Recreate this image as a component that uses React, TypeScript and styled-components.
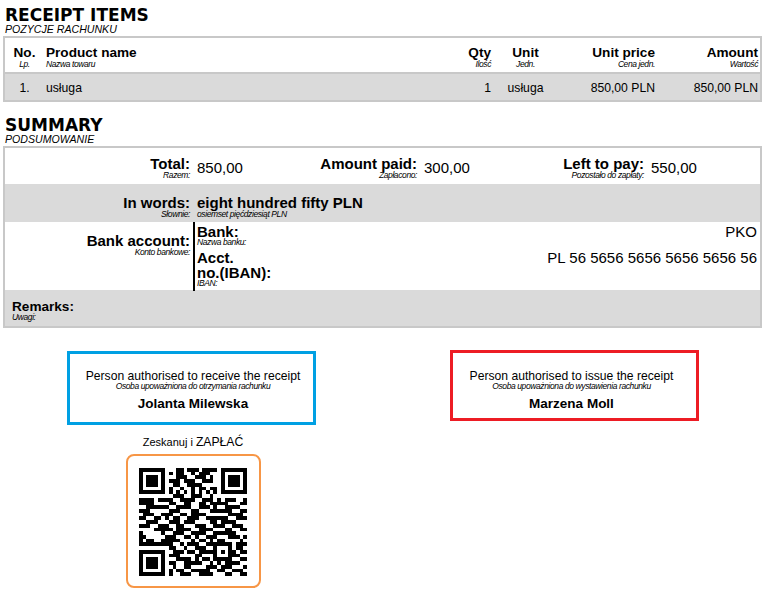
import React from 'react'
import styled, { createGlobalStyle } from 'styled-components'

const GlobalStyle = createGlobalStyle`
  html, body {
    margin: 0;
    padding: 0;
    background: #fff;
    color: #000;
    font-family: "Liberation Sans", Arial, sans-serif;
  }
`

const items = [
  { no: '1.', name: 'usługa', qty: '1', unit: 'usługa', price: '850,00 PLN', amount: '850,00 PLN' },
]

const totals = [
  { label: 'Total:', sub: 'Razem:', value: '850,00' },
  { label: 'Amount paid:', sub: 'Zapłacono:', value: '300,00' },
  { label: 'Left to pay:', sub: 'Pozostało do zapłaty:', value: '550,00' },
]

const qrRows = [
  '1111111 0 0011011101111 0 1111111',
  '1000001 0 1011001011100 0 1000001',
  '1011101 0 0011100111010 0 1011101',
  '1011101 0 1110111001110 0 1011101',
  '1011101 0 0110011110000 0 1011101',
  '1000001 0 1001001011011 0 1000001',
  '1111111 0 1010101010101 0 1111111',
  '0000000 0 0111001110010 0 0000000',
  '1111011 1 1001111001110 1 0111001',
  '1111000 0 1100110011011 1 1100011',
  '0011111 1 0011110011101 0 0111100',
  '1110000 0 1110001100011 1 1110011',
  '0111001 1 1001101111000 0 0011110',
  '1100110 1 0110011100111 1 1100111',
  '0011100 0 1110111000011 0 1111000',
  '1110011 1 0011000111001 1 1001110',
  '0000111 1 1011110011110 0 0110011',
  '1000001 0 0111001111001 1 1111000',
  '1100000 1 1100110100111 0 0011101',
  '1011001 1 1110001011010 1 1000010',
  '1111111 1 1001011100111 1 1110111',
  '0000000 0 1100100111001 0 0010110',
  '1111111 0 0111011011111 0 1011011',
  '1000001 0 1110000110001 0 0011100',
  '1011101 0 0011110101101 1 1110011',
  '1011101 0 1100111110010 1 0111100',
  '1011101 0 0100110000111 0 1110001',
  '1000001 0 1011001111100 1 1001110',
  '1111111 0 1001110011110 0 0110011',
].map(r => r.replace(/ /g, ''))

// modules as one path, row by row
const qrPath = qrRows
  .map((row, y) =>
    row
      .split('')
      .map((c, x) => (c === '1' ? `M${x} ${y}h1v1h-1z` : ''))
      .join(''),
  )
  .join('')

function Label({ main, sub }: { main: string; sub: string }) {
  return (
    <LabelBox>
      <LabelMain>{main}</LabelMain>
      <SubText>{sub}</SubText>
    </LabelBox>
  )
}

export default function App() {
  return (
    <Page>
      <GlobalStyle />
      <Title>RECEIPT ITEMS</Title>
      <TitleSub>POZYCJE RACHUNKU</TitleSub>
      <Frame>
        <ItemRow $head>
          <HeadCell $align="center"><HeadMain>No.</HeadMain><SubText>Lp.</SubText></HeadCell>
          <HeadCell $align="left"><HeadMain>Product name</HeadMain><SubText>Nazwa towaru</SubText></HeadCell>
          <HeadCell $align="right"><HeadMain>Qty</HeadMain><SubText>Ilość</SubText></HeadCell>
          <HeadCell $align="center"><HeadMain>Unit</HeadMain><SubText>Jedn.</SubText></HeadCell>
          <HeadCell $align="right"><HeadMain>Unit price</HeadMain><SubText>Cena jedn.</SubText></HeadCell>
          <HeadCell $align="right"><HeadMain>Amount</HeadMain><SubText>Wartość</SubText></HeadCell>
        </ItemRow>
        {items.map(item => (
          <ItemRow key={item.no}>
            <BodyCell $align="center">{item.no}</BodyCell>
            <BodyCell $align="left">{item.name}</BodyCell>
            <BodyCell $align="right">{item.qty}</BodyCell>
            <BodyCell $align="center">{item.unit}</BodyCell>
            <BodyCell $align="right">{item.price}</BodyCell>
            <BodyCell $align="right">{item.amount}</BodyCell>
          </ItemRow>
        ))}
      </Frame>

      <Title $spaced>SUMMARY</Title>
      <TitleSub>PODSUMOWANIE</TitleSub>
      <Frame>
        <TotalsRow>
          {totals.map(t => (
            <React.Fragment key={t.label}>
              <Label main={t.label} sub={t.sub} />
              <TotalValue>{t.value}</TotalValue>
            </React.Fragment>
          ))}
        </TotalsRow>
        <WordsRow>
          <Label main="In words:" sub="Słownie:" />
          <WordsValue>
            <LabelMain>eight hundred fifty PLN</LabelMain>
            <SubText>osiemset pięćdziesiąt PLN</SubText>
          </WordsValue>
        </WordsRow>
        <BankRow>
          <Label main="Bank account:" sub="Konto bankowe:" />
          <BankDetails>
            <BankLine>
              <BankName>
                <LabelMain>Bank:</LabelMain>
                <SubText>Nazwa banku:</SubText>
              </BankName>
              <BankValue>PKO</BankValue>
            </BankLine>
            <BankLine>
              <BankName>
                <LabelMain>Acct.<br />no.(IBAN):</LabelMain>
                <SubText>IBAN:</SubText>
              </BankName>
              <BankValue>PL 56 5656 5656 5656 5656 56</BankValue>
            </BankLine>
          </BankDetails>
        </BankRow>
        <RemarksRow>
          <RemarksMain>Remarks:</RemarksMain>
          <SubText>Uwagi:</SubText>
        </RemarksRow>
      </Frame>

      <Signatures>
        <SignColumn>
          <SignBox $color="#00a0e3" $height={74} $top={23} $pad="15px 0 0 3px">
            <SignRole>Person authorised to receive the receipt</SignRole>
            <SubText>Osoba upoważniona do otrzymania rachunku</SubText>
            <SignName>Jolanta Milewska</SignName>
          </SignBox>
          <ScanLabel>Zeskanuj i <ScanStrong>ZAPŁAĆ</ScanStrong></ScanLabel>
          <QrCard>
            <svg width="108" height="108" viewBox="0 0 29 29" shapeRendering="crispEdges">
              <path d={qrPath} fill="#000" />
            </svg>
          </QrCard>
        </SignColumn>
        <SignColumn>
          <SignBox $color="#ed1c24" $height={71} $top={22} $pad="16px 6px 0 0">
            <SignRole>Person authorised to issue the receipt</SignRole>
            <SubText>Osoba upoważniona do wystawienia rachunku</SubText>
            <SignName>Marzena Moll</SignName>
          </SignBox>
        </SignColumn>
      </Signatures>
    </Page>
  )
}

const Page = styled.div`
  width: 773px;
  height: 610px;
  overflow: hidden;
  padding-top: 6px;
  box-sizing: border-box;
`

const Title = styled.div<{ $spaced?: boolean }>`
  margin: ${p => (p.$spaced ? '14px' : '0')} 0 0 5px;
  font-family: "DejaVu Sans", Verdana, sans-serif;
  font-size: 17px;
  font-weight: bold;
  line-height: 18px;
`

const TitleSub = styled.div`
  margin: -1px 0 1px 5px;
  font-size: 10.6px;
  font-style: italic;
  line-height: 12px;
`

const Frame = styled.div`
  width: 759px;
  margin-left: 3px;
  box-sizing: border-box;
  border: 2px solid #c8c8c8;
`

const ItemRow = styled.div<{ $head?: boolean }>`
  display: grid;
  grid-template-columns: 38px 1fr 60px 64px 100px 103px;
  height: ${p => (p.$head ? '36px' : '26px')};
  box-sizing: border-box;
  background: ${p => (p.$head ? '#fff' : '#dadada')};
  border-bottom: ${p => (p.$head ? '2px solid #c8c8c8' : 'none')};
`

const HeadCell = styled.div<{ $align: string }>`
  padding: 7px 2px 0 3px;
  text-align: ${p => p.$align};
`

const HeadMain = styled.div`
  font-size: 13.6px;
  font-weight: bold;
  line-height: 16px;
`

const SubText = styled.div`
  font-size: 8.5px;
  font-style: italic;
  letter-spacing: -0.4px;
  line-height: 7px;
  white-space: nowrap;
`

const BodyCell = styled.div<{ $align: string }>`
  padding: 0 2px 0 3px;
  font-size: 12.2px;
  line-height: 29px;
  text-align: ${p => p.$align};
`

const LabelBox = styled.div`
  padding-right: 2px;
  text-align: right;
`

const LabelMain = styled.div`
  font-size: 15px;
  font-weight: bold;
  line-height: 17px;
`

const TotalsRow = styled.div`
  display: grid;
  grid-template-columns: 187px 100px 127px 100px 127px 1fr;
  height: 36px;
  padding-top: 7px;
  box-sizing: border-box;
`

const TotalValue = styled.div`
  padding: 4px 0 0 5px;
  font-size: 15px;
  line-height: 17px;
`

const WordsRow = styled.div`
  display: grid;
  grid-template-columns: 187px 1fr;
  height: 38px;
  padding-top: 10px;
  box-sizing: border-box;
  background: #dadada;
`

const WordsValue = styled.div`
  padding-left: 5px;
`

const BankRow = styled.div`
  display: grid;
  grid-template-columns: 187px 1fr;
  height: 68px;
  > :first-child {
    padding-top: 10px;
  }
`

const BankDetails = styled.div`
  margin-left: 1px;
  padding: 2px 3px 0 2px;
  border-left: 2px solid #000;
  height: 69px;
  box-sizing: border-box;
`

const BankLine = styled.div`
  display: flex;
  justify-content: space-between;
  margin-bottom: 4px;
`

const BankName = styled.div`
  width: 84px;
  ${LabelMain} {
    line-height: 15px;
  }
`

const BankValue = styled.div`
  font-size: 15px;
  line-height: 15px;
  white-space: nowrap;
`

const RemarksRow = styled.div`
  height: 36px;
  padding: 9px 0 0 7px;
  box-sizing: border-box;
  background: #dadada;
`

const RemarksMain = styled.div`
  font-size: 13.6px;
  font-weight: bold;
  line-height: 15px;
`

const Signatures = styled.div`
  display: grid;
  grid-template-columns: 383px 383px;
`

const SignColumn = styled.div`
  display: flex;
  flex-flow: column;
  align-items: center;
`

const SignBox = styled.div<{ $color: string; $height: number; $top: number; $pad: string }>`
  width: 249px;
  height: ${p => p.$height}px;
  margin-top: ${p => p.$top}px;
  padding: ${p => p.$pad};
  box-sizing: border-box;
  border: 3px solid ${p => p.$color};
  text-align: center;
`

const SignRole = styled.div`
  font-size: 12.15px;
  line-height: 14px;
`

const SignName = styled.div`
  margin-top: 6px;
  font-size: 13.5px;
  font-weight: bold;
  line-height: 16px;
`

const ScanLabel = styled.div`
  margin: 10px 0 0 3px;
  font-size: 11px;
  line-height: 14px;
`

const ScanStrong = styled.span`
  font-size: 12.2px;
`

const QrCard = styled.div`
  display: flex;
  justify-content: center;
  align-items: center;
  width: 135px;
  height: 134px;
  margin: 5px 0 0 3px;
  padding-top: 2px;
  box-sizing: border-box;
  border: 2px solid #f79646;
  border-radius: 8px;
`
